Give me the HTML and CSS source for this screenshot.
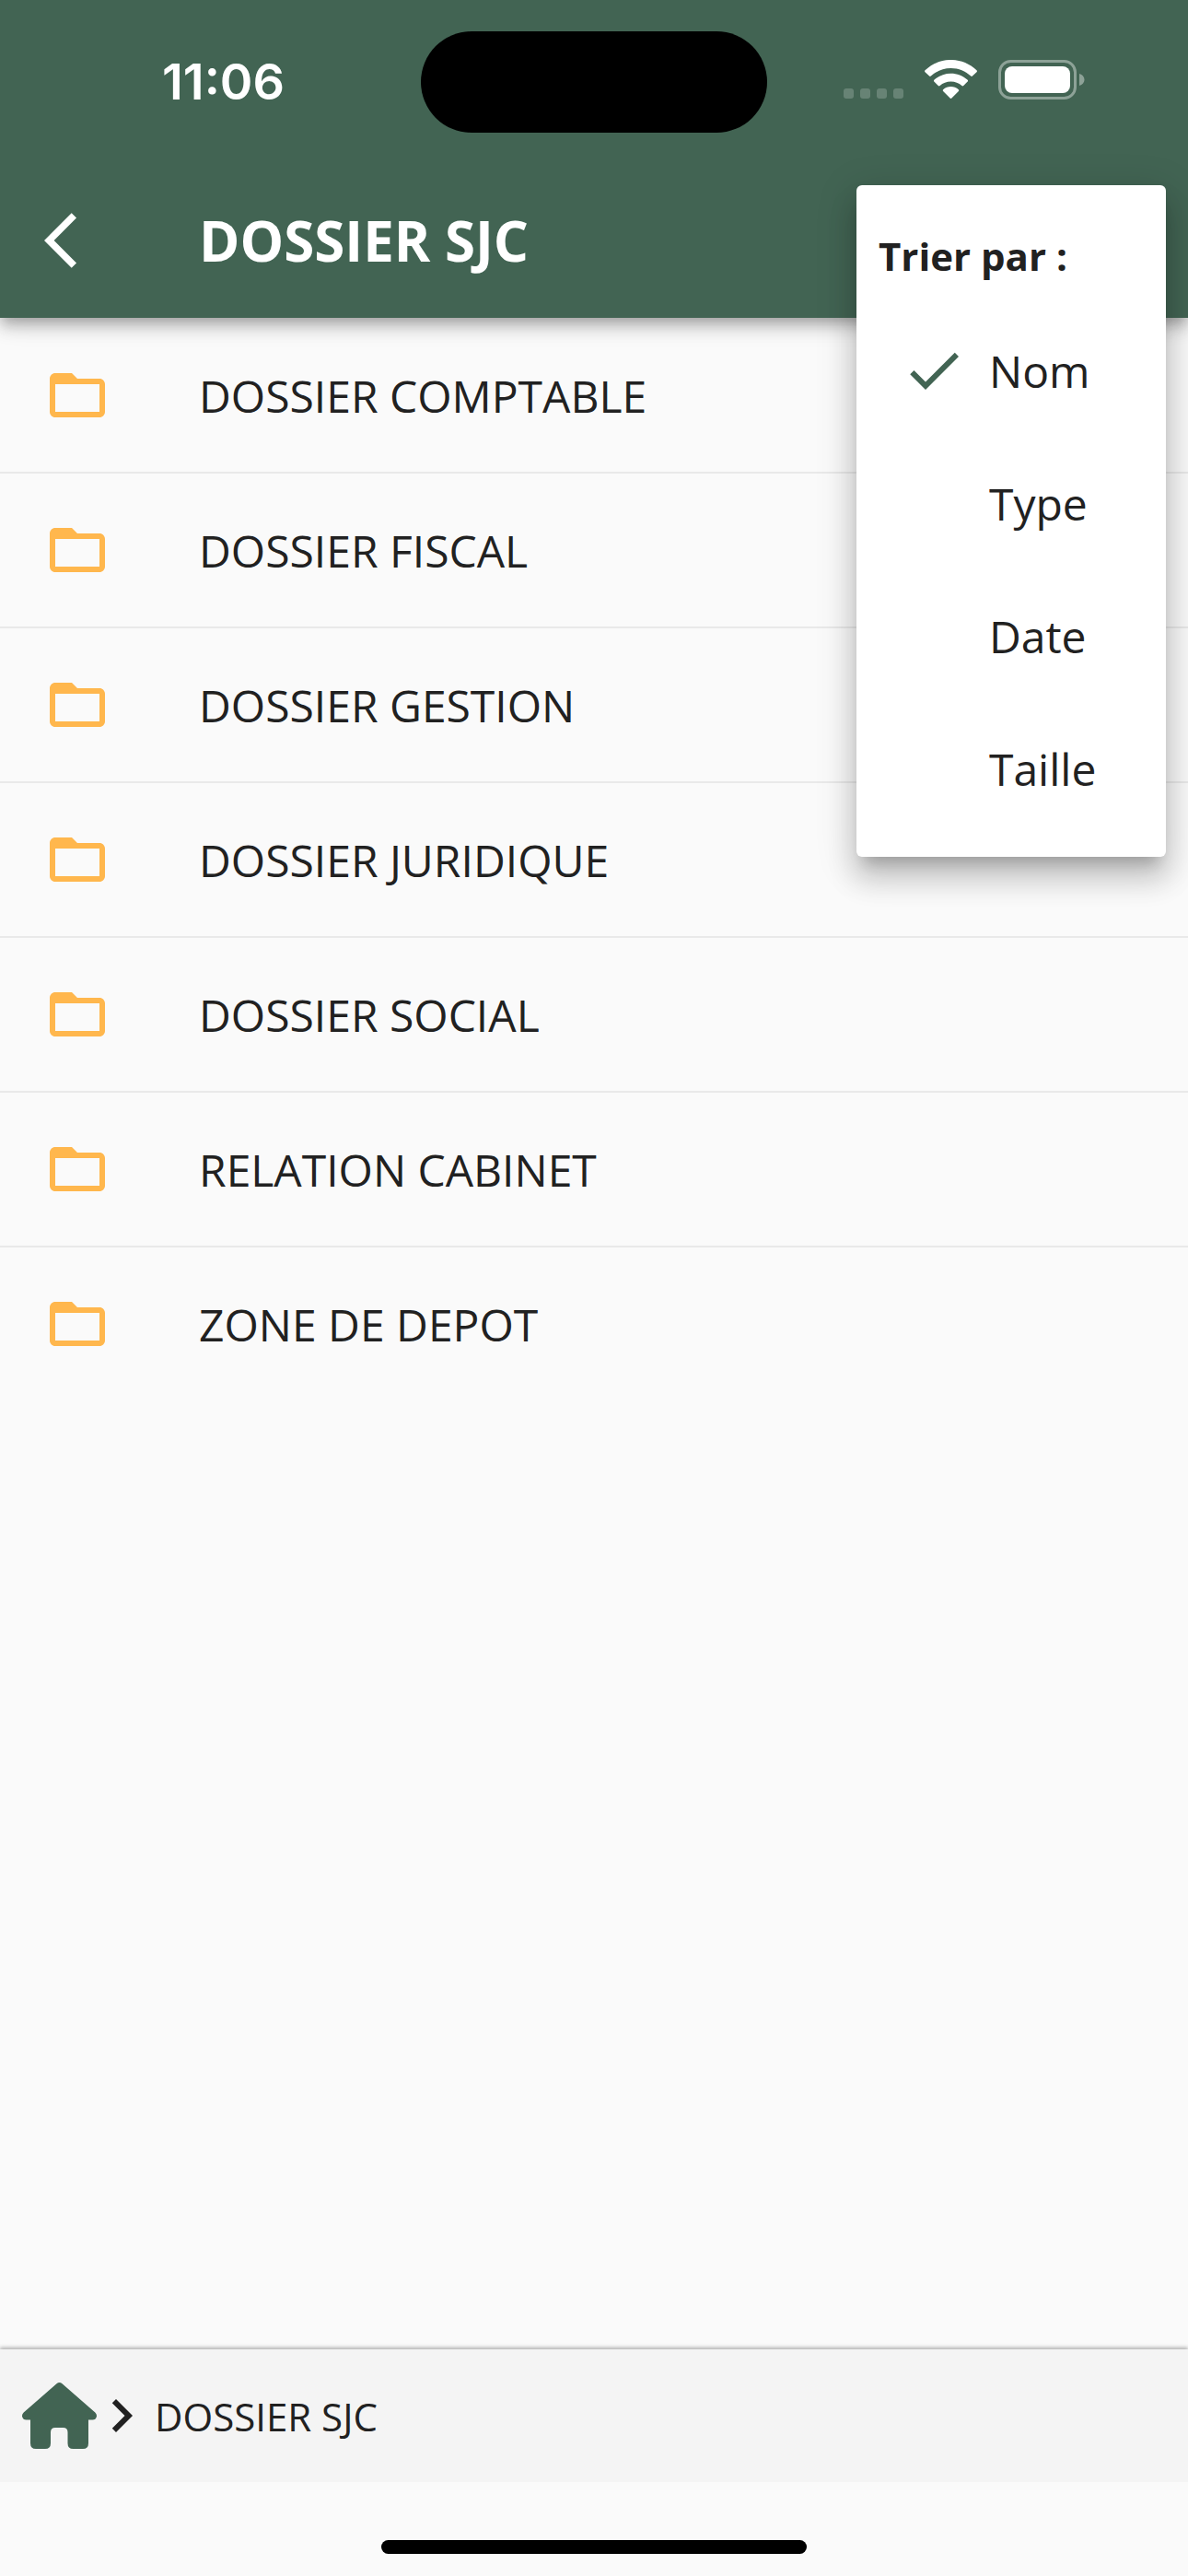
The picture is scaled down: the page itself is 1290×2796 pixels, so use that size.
FILE: index.html
```html
<!DOCTYPE html>
<html lang="fr">

<head>
    <meta charset="UTF-8">
    <meta name="viewport" content="width=device-width, initial-scale=1.0">
    <title>DOSSIER SJC</title>
    <link rel="stylesheet" href="styles.css">
</head>

<body>
    <svg width="0" height="0" class="sprite" aria-hidden="true">
        <symbol id="folder" viewBox="0 0 24 24">
            <path d="M20 6h-8l-2-2H4c-1.1 0-2 .9-2 2v12c0 1.1.9 2 2 2h16c1.1 0 2-.9 2-2V8c0-1.1-.9-2-2-2zm0 12H4V8h16v10z"/>
        </symbol>
    </svg>

    <header class="header">
        <div class="status-bar">
            <div class="time">11:06</div>
            <div class="island"></div>
            <div class="status-icons">
                <svg width="65" height="43" viewBox="0 0 65 43" fill="#fff" fill-opacity="0.2">
                    <rect x="0" y="31" width="11" height="11" rx="3"/>
                    <rect x="18" y="31" width="11" height="11" rx="3"/>
                    <rect x="36" y="31" width="11" height="11" rx="3"/>
                    <rect x="54" y="31" width="11" height="11" rx="3"/>
                </svg>
                <svg width="57" height="43" viewBox="0 0 57 43" fill="#fff">
                    <path d="M28.500 9C37 9 44.500 12.300 50.200 17.600C50.700 18.100 51.400 18.100 51.900 17.600L56.500 13.200C57.100 12.600 57.100 11.900 56.500 11.300C41 -3.800 16 -3.800 .5 11.300C-.1 11.900 -.1 12.600 .5 13.200L5.100 17.600C5.600 18.100 6.300 18.100 6.800 17.600C12.500 12.300 20 9 28.500 9Z"/>
                    <path d="M28.500 23.500C33 23.500 37.200 25.200 40.400 28C40.900 28.500 41.700 28.500 42.200 28L46.700 23.500C47.200 23 47.200 22.300 46.700 21.800C36.500 12.400 20.500 12.400 10.300 21.800C9.800 22.300 9.800 23 10.300 23.500L14.800 28C15.300 28.500 16.100 28.500 16.600 28C19.800 25.200 24 23.500 28.500 23.500Z"/>
                    <path d="M36.900 32.300C37.400 32.800 37.400 33.500 36.900 34L29.400 41.600C28.900 42.200 28.100 42.200 27.600 41.600L20.100 34C19.600 33.500 19.600 32.800 20.100 32.300C24.800 28 32.200 28 36.900 32.300Z"/>
                </svg>
                <svg width="95" height="43" viewBox="0 0 95 43" fill="#fff">
                    <rect x="1.500" y="1.500" width="82" height="40" rx="12" fill="none" stroke="#fff" stroke-width="3" stroke-opacity="0.4"/>
                    <rect x="7" y="7" width="71" height="29" rx="8"/>
                    <path d="M88 15C91.500 16 93.500 18.700 93.500 21.500S91.500 27 88 28Z" fill-opacity="0.4"/>
                </svg>
            </div>
        </div>
        <div class="toolbar">
            <button class="back" aria-label="Retour">
                <svg class="icon" viewBox="0 0 24 24"><path d="M11.670 3.870L9.900 2.100 0 12l9.900 9.900 1.770-1.770L3.540 12z"/></svg>
            </button>
            <h1>DOSSIER SJC</h1>
        </div>

        <div class="menu" role="menu" aria-labelledby="sort-title">
            <h2 id="sort-title">Trier par :</h2>
            <button class="menu-item" role="menuitemradio" aria-checked="true">
                <svg class="icon" viewBox="0 0 24 24"><path d="M9 16.170L4.830 12l-1.420 1.410L9 19 21 7l-1.410-1.410z"/></svg>
                Nom
            </button>
            <button class="menu-item" role="menuitemradio" aria-checked="false"><span class="icon"></span>Type</button>
            <button class="menu-item" role="menuitemradio" aria-checked="false"><span class="icon"></span>Date</button>
            <button class="menu-item" role="menuitemradio" aria-checked="false"><span class="icon"></span>Taille</button>
        </div>
    </header>

    <main class="content">
        <ul class="folders">
            <li><a href="#"><svg class="icon"><use href="#folder"/></svg>DOSSIER COMPTABLE</a></li>
            <li><a href="#"><svg class="icon"><use href="#folder"/></svg>DOSSIER FISCAL</a></li>
            <li><a href="#"><svg class="icon"><use href="#folder"/></svg>DOSSIER GESTION</a></li>
            <li><a href="#"><svg class="icon"><use href="#folder"/></svg>DOSSIER JURIDIQUE</a></li>
            <li><a href="#"><svg class="icon"><use href="#folder"/></svg>DOSSIER SOCIAL</a></li>
            <li><a href="#"><svg class="icon"><use href="#folder"/></svg>RELATION CABINET</a></li>
            <li><a href="#"><svg class="icon"><use href="#folder"/></svg>ZONE DE DEPOT</a></li>
        </ul>
    </main>

    <nav class="breadcrumb">
        <a href="#" class="home" aria-label="Accueil">
            <svg width="81" height="72" viewBox="0 0 81 72">
                <path d="M37.500 1.200Q40.500 -1.200 43.500 1.200L79.300 32.500Q81.400 34.500 80.900 37Q80 40.500 76.500 40.500H72V66Q72 72 66 72H55.500Q49.500 72 49.500 66V54Q49.500 49 44.500 49H36Q31 49 31 54V66Q31 72 25 72H15Q9 72 9 66V40.500H4.500Q1 40.500 .1 37Q-.4 34.500 1.700 32.500Z"/>
            </svg>
        </a>
        <svg class="icon" viewBox="0 0 24 24"><path d="M10 6L8.590 7.410 13.170 12l-4.580 4.590L10 18l6-6z"/></svg>
        <a href="#">DOSSIER SJC</a>
    </nav>

    <div class="bottom-area">
        <div class="home-indicator"></div>
    </div>
</body>

</html>
```

FILE: styles.css
```css
* {
    box-sizing: border-box;
}

body {
    display: flex;
    flex-direction: column;
    min-height: 100vh;
    margin: 0;
    font-family: "Open Sans", sans-serif;
    font-size: 48px;
    color: #212121;
    background-color: #fafafa;
}

a {
    color: inherit;
    text-decoration: none;
}

button {
    padding: 0;
    border: none;
    background: none;
    font: inherit;
    color: inherit;
    cursor: pointer;
}

.sprite {
    position: absolute;
}

.icon {
    flex: none;
    width: 72px;
    height: 72px;
    fill: currentColor;
}

.header {
    position: relative;
    z-index: 1;
    color: #fff;
    background-color: #426453;
    box-shadow: 0 6px 12px -3px rgba(0, 0, 0, 0.2), 0 12px 15px rgba(0, 0, 0, 0.14), 0 3px 30px rgba(0, 0, 0, 0.12);
}

.status-bar {
    display: grid;
    grid-template-columns: 1fr 376px 1fr;
    align-items: center;
    height: 177px;
}

.time {
    padding-left: 28px;
    text-align: center;
    font-family: Inter, sans-serif;
    font-size: 54px;
    font-weight: 600;
}

.island {
    height: 110px;
    border-radius: 55px;
    background-color: #000;
}

.status-icons {
    display: flex;
    justify-content: center;
    gap: 23px;
    padding: 0 28px 4px 0;
}

.toolbar {
    display: flex;
    align-items: center;
    height: 168px;
    padding: 0 48px;
}

.back {
    display: flex;
    margin-right: 96px;
}

.toolbar h1 {
    margin: 0;
    font-size: 60px;
    font-weight: 700;
}

.menu {
    position: absolute;
    top: 201px;
    right: 24px;
    width: 336px;
    padding: 24px 0;
    border-radius: 6px;
    color: #212121;
    background-color: #fff;
    box-shadow: 0 15px 15px -9px rgba(0, 0, 0, 0.2), 0 24px 30px 3px rgba(0, 0, 0, 0.14), 0 9px 42px 6px rgba(0, 0, 0, 0.12);
}

.menu h2 {
    margin: 0;
    padding: 0 24px;
    font-size: 42px;
    font-weight: 700;
    line-height: 105px;
}

.menu-item {
    display: flex;
    align-items: center;
    gap: 24px;
    width: 100%;
    height: 144px;
    padding-left: 48px;
}

.menu-item .icon {
    color: #426453;
}

.content {
    flex: 1;
    padding-top: 1px;
}

.folders {
    margin: 0;
    padding: 0;
    list-style: none;
}

.folders li + li {
    border-top: 2px solid #e9e9e9;
}

.folders a {
    display: flex;
    align-items: center;
    gap: 96px;
    height: 166px;
    padding: 0 48px;
}

.folders .icon {
    color: #ffb74d;
}

.breadcrumb {
    display: flex;
    align-items: center;
    height: 144px;
    padding: 0 24px;
    font-size: 42px;
    background-color: #f4f4f4;
    box-shadow: 0 -2px 4px rgba(0, 0, 0, 0.3);
}

/* the chevron's box overlaps the wide roof of the house */
.home {
    display: flex;
    margin-right: -9px;
    fill: #426453;
}

/* sits over the lower half of the breadcrumb's shadow */
.bottom-area {
    position: relative;
    display: flex;
    justify-content: center;
    align-items: flex-end;
    height: 102px;
    padding-bottom: 24px;
    background-color: #fafafa;
}

.home-indicator {
    width: 462px;
    height: 15px;
    border-radius: 8px;
    background-color: #000;
}
```
